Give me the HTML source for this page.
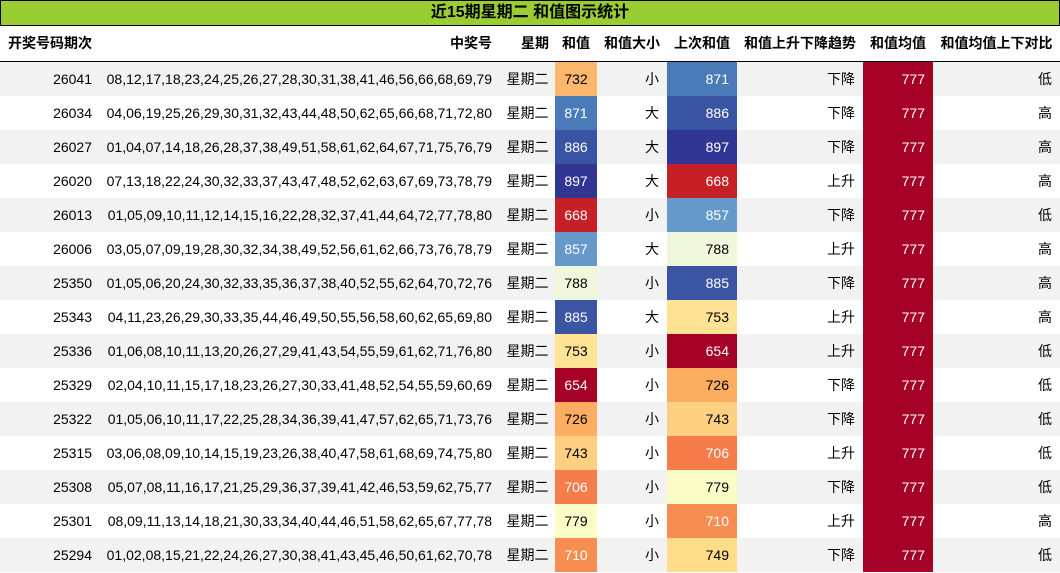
<!DOCTYPE html>
<html><head><meta charset="utf-8"><style>
*{margin:0;padding:0;box-sizing:border-box}
body{width:1060px;height:573px;overflow:hidden;background:#fff;font-family:"Liberation Sans","Noto Sans CJK SC",sans-serif;font-size:14px;color:#000}
.title{height:26px;background:#9acd32;border:1px solid #000;text-align:center;font-weight:bold;font-size:16px;line-height:24px}
table{border-collapse:collapse;table-layout:fixed;width:1060px}
th{height:35px;line-height:34px;font-weight:bold;border-bottom:1px solid #000;text-align:right;padding-right:8px;white-space:nowrap;vertical-align:middle}
tr.r{height:34px}
td{height:34px;line-height:34px;text-align:right;padding-right:8px;white-space:nowrap;overflow:hidden}
tr.g td{background:#f2f2f2}
td.c,th.c{text-align:center;padding-right:0}
.w{color:#fff}
</style></head><body>
<div class="title">近15期星期二 和值图示统计</div>
<table>
<colgroup><col style="width:100px"><col style="width:400px"><col style="width:55px"><col style="width:42px"><col style="width:70px"><col style="width:70px"><col style="width:126px"><col style="width:70px"><col style="width:127px"></colgroup>
<tr style="height:35px"><th style="text-align:left;padding-left:8px">开奖号码期次</th><th>中奖号</th><th style="padding-right:6px">星期</th><th class="c">和值</th><th class="c">和值大小</th><th class="c">上次和值</th><th class="c">和值上升下降趋势</th><th class="c">和值均值</th><th class="c">和值均值上下对比</th></tr>
<tr class="r g"><td>26041</td><td>08,12,17,18,23,24,25,26,27,28,30,31,38,41,46,56,66,68,69,79</td><td class="c">星期二</td><td class="c" style="background:#fdb76c">732</td><td>小</td><td class="w" style="background:#4a7ab7">871</td><td>下降</td><td class="w" style="background:#a50026">777</td><td>低</td></tr>
<tr class="r"><td>26034</td><td>04,06,19,25,26,29,30,31,32,43,44,48,50,62,65,66,68,71,72,80</td><td class="c">星期二</td><td class="c w" style="background:#4a7ab7">871</td><td>大</td><td class="w" style="background:#3a54a4">886</td><td>下降</td><td class="w" style="background:#a50026">777</td><td>高</td></tr>
<tr class="r g"><td>26027</td><td>01,04,07,14,18,26,28,37,38,49,51,58,61,62,64,67,71,75,76,79</td><td class="c">星期二</td><td class="c w" style="background:#3a54a4">886</td><td>大</td><td class="w" style="background:#313695">897</td><td>下降</td><td class="w" style="background:#a50026">777</td><td>高</td></tr>
<tr class="r"><td>26020</td><td>07,13,18,22,24,30,32,33,37,43,47,48,52,62,63,67,69,73,78,79</td><td class="c">星期二</td><td class="c w" style="background:#313695">897</td><td>大</td><td class="w" style="background:#c62026">668</td><td>上升</td><td class="w" style="background:#a50026">777</td><td>高</td></tr>
<tr class="r g"><td>26013</td><td>01,05,09,10,11,12,14,15,16,22,28,32,37,41,44,64,72,77,78,80</td><td class="c">星期二</td><td class="c w" style="background:#c62026">668</td><td>小</td><td class="w" style="background:#6499c9">857</td><td>下降</td><td class="w" style="background:#a50026">777</td><td>低</td></tr>
<tr class="r"><td>26006</td><td>03,05,07,09,19,28,30,32,34,38,49,52,56,61,62,66,73,76,78,79</td><td class="c">星期二</td><td class="c w" style="background:#6499c9">857</td><td>大</td><td style="background:#eff8dc">788</td><td>上升</td><td class="w" style="background:#a50026">777</td><td>高</td></tr>
<tr class="r g"><td>25350</td><td>01,05,06,20,24,30,32,33,35,36,37,38,40,52,55,62,64,70,72,76</td><td class="c">星期二</td><td class="c" style="background:#eff8dc">788</td><td>小</td><td class="w" style="background:#3b55a2">885</td><td>下降</td><td class="w" style="background:#a50026">777</td><td>高</td></tr>
<tr class="r"><td>25343</td><td>04,11,23,26,29,30,33,35,44,46,49,50,55,56,58,60,62,65,69,80</td><td class="c">星期二</td><td class="c w" style="background:#3b55a2">885</td><td>大</td><td style="background:#fee395">753</td><td>上升</td><td class="w" style="background:#a50026">777</td><td>高</td></tr>
<tr class="r g"><td>25336</td><td>01,06,08,10,11,13,20,26,27,29,41,43,54,55,59,61,62,71,76,80</td><td class="c">星期二</td><td class="c" style="background:#fee395">753</td><td>小</td><td class="w" style="background:#a50026">654</td><td>上升</td><td class="w" style="background:#a50026">777</td><td>低</td></tr>
<tr class="r"><td>25329</td><td>02,04,10,11,15,17,18,23,26,27,30,33,41,48,52,54,55,59,60,69</td><td class="c">星期二</td><td class="c w" style="background:#a50026">654</td><td>小</td><td style="background:#fdad60">726</td><td>下降</td><td class="w" style="background:#a50026">777</td><td>低</td></tr>
<tr class="r g"><td>25322</td><td>01,05,06,10,11,17,22,25,28,34,36,39,41,47,57,62,65,71,73,76</td><td class="c">星期二</td><td class="c" style="background:#fdad60">726</td><td>小</td><td style="background:#fed081">743</td><td>下降</td><td class="w" style="background:#a50026">777</td><td>低</td></tr>
<tr class="r"><td>25315</td><td>03,06,08,09,10,14,15,19,23,26,38,40,47,58,61,68,69,74,75,80</td><td class="c">星期二</td><td class="c" style="background:#fed081">743</td><td>小</td><td class="w" style="background:#f67c4a">706</td><td>上升</td><td class="w" style="background:#a50026">777</td><td>低</td></tr>
<tr class="r g"><td>25308</td><td>05,07,08,11,16,17,21,25,29,36,37,39,41,42,46,53,59,62,75,77</td><td class="c">星期二</td><td class="c w" style="background:#f67c4a">706</td><td>小</td><td style="background:#fbfdc7">779</td><td>下降</td><td class="w" style="background:#a50026">777</td><td>低</td></tr>
<tr class="r"><td>25301</td><td>08,09,11,13,14,18,21,30,33,34,40,44,46,51,58,62,65,67,77,78</td><td class="c">星期二</td><td class="c" style="background:#fbfdc7">779</td><td>小</td><td class="w" style="background:#f88d52">710</td><td>上升</td><td class="w" style="background:#a50026">777</td><td>高</td></tr>
<tr class="r g"><td>25294</td><td>01,02,08,15,21,22,24,26,27,30,38,41,43,45,46,50,61,62,70,78</td><td class="c">星期二</td><td class="c w" style="background:#f88d52">710</td><td>小</td><td style="background:#fedc8a">749</td><td>下降</td><td class="w" style="background:#a50026">777</td><td>低</td></tr>
</table>
</body></html>
